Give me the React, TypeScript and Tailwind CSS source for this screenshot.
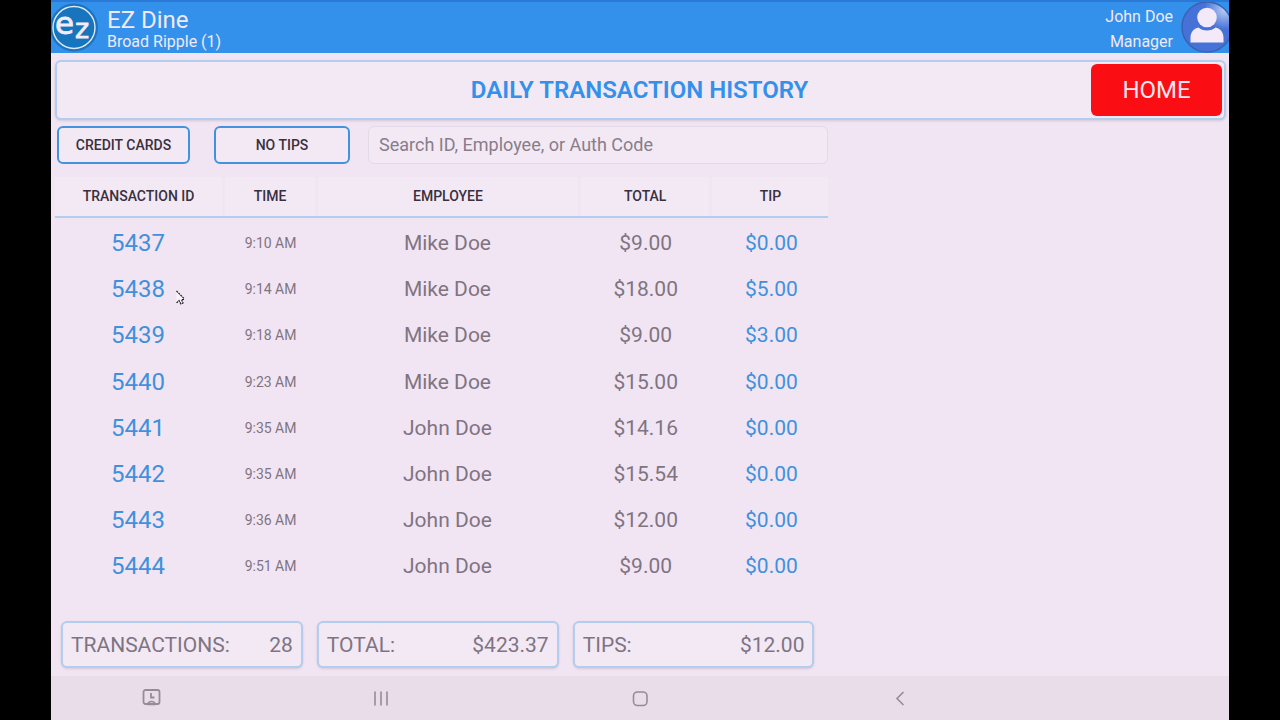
import React, { useState } from "react";

interface Transaction {
  id: number;
  time: string;
  employee: string;
  total: string;
  tip: string;
}

const transactions: Transaction[] = [
  { id: 5437, time: "9:10 AM", employee: "Mike Doe", total: "$9.00", tip: "$0.00" },
  { id: 5438, time: "9:14 AM", employee: "Mike Doe", total: "$18.00", tip: "$5.00" },
  { id: 5439, time: "9:18 AM", employee: "Mike Doe", total: "$9.00", tip: "$3.00" },
  { id: 5440, time: "9:23 AM", employee: "Mike Doe", total: "$15.00", tip: "$0.00" },
  { id: 5441, time: "9:35 AM", employee: "John Doe", total: "$14.16", tip: "$0.00" },
  { id: 5442, time: "9:35 AM", employee: "John Doe", total: "$15.54", tip: "$0.00" },
  { id: 5443, time: "9:36 AM", employee: "John Doe", total: "$12.00", tip: "$0.00" },
  { id: 5444, time: "9:51 AM", employee: "John Doe", total: "$9.00", tip: "$0.00" },
];

const summary = [
  { label: "TRANSACTIONS:", value: "28" },
  { label: "TOTAL:", value: "$423.37" },
  { label: "TIPS:", value: "$12.00" },
];

const headers = ["TRANSACTION ID", "TIME", "EMPLOYEE", "TOTAL", "TIP"];

const Logo: React.FC = () => (
  <svg className="w-12 h-[50px] shrink-0" viewBox="0 0 48 50" role="img" aria-label="EZ">
    <circle cx="23" cy="24.5" r="24" fill="#1b74bd" />
    <circle cx="23" cy="24.5" r="21" fill="#1775be" stroke="#dfe9f8" strokeWidth="1.4" />
    <g fill="#f3ecf8" stroke="#f3ecf8" strokeWidth="0.8" fontFamily="DejaVu Sans, sans-serif">
      <text x="4" y="30.5" fontSize="31">e</text>
      <text x="24" y="35" fontSize="27">z</text>
    </g>
  </svg>
);

const Avatar: React.FC = () => (
  <svg className="w-12 h-[53px] shrink-0" viewBox="0 0 48 53" role="img" aria-label="Profile">
    <defs>
      <radialGradient id="shine" cx="0.85" cy="0.15" r="0.4">
        <stop offset="0" stopColor="#b9cdf5" />
        <stop offset="1" stopColor="#4672d8" />
      </radialGradient>
    </defs>
    <circle cx="26" cy="26" r="25" fill="url(#shine)" stroke="#3a62b4" strokeWidth="1.5" />
    <circle cx="26" cy="16.5" r="9.8" fill="#f3e9f8" />
    <path d="M9.5 41.5v-5c0-5 3-9 8-10 2 2 5 3 8.500 3s6.500-1 8.500-3c5 1 8 5 8 10v5z" fill="#f3e9f8" />
  </svg>
);

const App: React.FC = () => {
  const [search, setSearch] = useState("");

  return (
    <div className="min-h-screen bg-black px-[51px] flex font-['Roboto',sans-serif]">
      <div className="relative flex-1 flex flex-col bg-[#f1e5f3] text-[#7f7482]">
        <header className="h-[53px] flex items-center justify-between border-t-2 border-[#2b79d6] bg-[#3391ec] text-[#f1e9f8] overflow-hidden">
          <div className="flex items-center gap-2">
            <Logo />
            <div className="pt-1">
              <p className="text-2xl leading-6">EZ Dine</p>
              <p className="text-base leading-5">Broad Ripple (1)</p>
            </div>
          </div>
          <div className="flex items-center gap-2">
            <div className="pt-0.5 text-right text-base leading-[25px]">
              <p>John Doe</p>
              <p>Manager</p>
            </div>
            <Avatar />
          </div>
        </header>

        <div className="ml-1 mr-[3px] mt-[7px] h-[60px] pr-0.5 grid grid-cols-[1fr_auto_1fr] items-center rounded-md border-2 border-[#b3cdee] bg-[#f2e9f5] shadow-sm">
          <h1 className="col-start-2 text-2xl leading-8 font-semibold text-[#3391ec]">
            DAILY TRANSACTION HISTORY
          </h1>
          <button className="justify-self-end w-[131px] h-[52px] rounded-md bg-[#fa0e14] text-2xl leading-8 text-[#f9e6ee]">
            HOME
          </button>
        </div>

        <main className="w-[66%] flex-1 flex flex-col">
          <div className="flex pl-1.5 mt-1.5 h-[38px]">
            <button className="w-[133px] rounded-md border-2 border-[#4292de] bg-[#f2e9f5] text-sm font-medium text-[#3a303d]">
              CREDIT CARDS
            </button>
            <button className="ml-6 w-[136px] rounded-md border-2 border-[#4292de] bg-[#f2e9f5] text-sm font-medium text-[#3a303d]">
              NO TIPS
            </button>
            <input
              type="text"
              aria-label="Search transactions"
              placeholder="Search ID, Employee, or Auth Code"
              value={search}
              onChange={(e) => setSearch(e.target.value)}
              className="ml-[18px] flex-1 min-w-0 rounded-md border border-[#e4d9e7] bg-[#f2e9f5] px-2.5 text-lg placeholder:text-[#887d8b] outline-none"
            />
          </div>

          <table className="mt-3 ml-1 h-[412px] table-fixed border-collapse text-center">
            <colgroup>
              <col className="w-[22%]" />
              <col className="w-[12%]" />
              <col className="w-[34%]" />
              <col className="w-[17%]" />
              <col className="w-[15%]" />
            </colgroup>
            <thead>
              <tr className="h-[41px] border-b-2 border-[#b3cdee]">
                {headers.map((header) => (
                  <th key={header} className="p-0 pr-[3px] last:pr-0 text-sm font-medium text-[#3a303d]">
                    <div className="h-[39px] flex items-center justify-center bg-[#f2e9f5]">{header}</div>
                  </th>
                ))}
              </tr>
            </thead>
            <tbody>
              {transactions.map((item) => (
                <tr key={item.id}>
                  <td className="p-0 pt-[3px] pr-1 text-2xl text-[#3f91de]">{item.id}</td>
                  <td className="p-0 pt-[3px] pr-0.5 text-sm">{item.time}</td>
                  <td className="p-0 pt-[3px] pr-1 text-[21px] leading-7">{item.employee}</td>
                  <td className="p-0 pt-[3px] pr-0.5 text-[21px] leading-7">{item.total}</td>
                  <td className="p-0 pt-[3px] pl-0.5 text-[21px] leading-7 text-[#3f91de]">{item.tip}</td>
                </tr>
              ))}
            </tbody>
          </table>

          <div className="mt-auto mb-2 pl-2.5 pr-3.5 grid grid-cols-3 gap-3.5">
            {summary.map((item) => (
              <div
                key={item.label}
                className="h-[47px] px-2 flex items-center justify-between rounded-md border-2 border-[#b3cdee] bg-[#f2e9f5] text-[21px] leading-7 shadow-sm"
              >
                <span>{item.label}</span>
                <span>{item.value}</span>
              </div>
            ))}
          </div>
        </main>

        <nav className="h-11 grid grid-cols-[17fr_22fr_22fr_22fr_17fr] items-center justify-items-center bg-[#e9ddea] text-[#978b9a]">
          <button aria-label="Screen timer">
            <svg className="w-5 h-5" viewBox="0 0 20 20" fill="none" stroke="currentColor" strokeWidth="1.8">
              <rect x="2.500" y="2" width="16" height="14" rx="2" />
              <path d="M10 5v4.500h3.500" strokeWidth="1.8" />
              <path d="M7 16.500c0-2 1.500-3 3.500-3s3.500 1 3.500 3z" strokeWidth="1.5" />
            </svg>
          </button>
          <button aria-label="Recent apps">
            <svg className="w-5 h-5" viewBox="0 0 20 20" fill="none" stroke="currentColor" strokeWidth="1.6">
              <path d="M4 3.500v14M10 3.500v14M16 3.500v14" />
            </svg>
          </button>
          <button aria-label="Home screen">
            <svg className="w-5 h-5" viewBox="0 0 20 20" fill="none" stroke="currentColor" strokeWidth="1.6">
              <rect x="3.500" y="4" width="13.500" height="13.500" rx="4" />
            </svg>
          </button>
          <button aria-label="Back">
            <svg className="w-5 h-5" viewBox="0 0 20 20" fill="none" stroke="currentColor" strokeWidth="1.6">
              <path d="M14.500 4L8 10.500l6.500 6.500" />
            </svg>
          </button>
        </nav>

        {/* mouse pointer */}
        <svg className="absolute left-[124px] top-[290px] w-3 h-4 pointer-events-none" viewBox="0 0 12 16">
          <path d="M1.500 1v12l2.500-2.500L6 14l2-1-1.500-3.500H9z" fill="#f8f4fa" />
          <path
            d="M1.500 1L9 8.500M9 9.500H6.500L8 13l-2 1-2-3.500L1.500 13"
            fill="none"
            stroke="#1d1822"
            strokeWidth="1.2"
            strokeDasharray="2 0.8"
          />
        </svg>
      </div>
    </div>
  );
};

export default App;
